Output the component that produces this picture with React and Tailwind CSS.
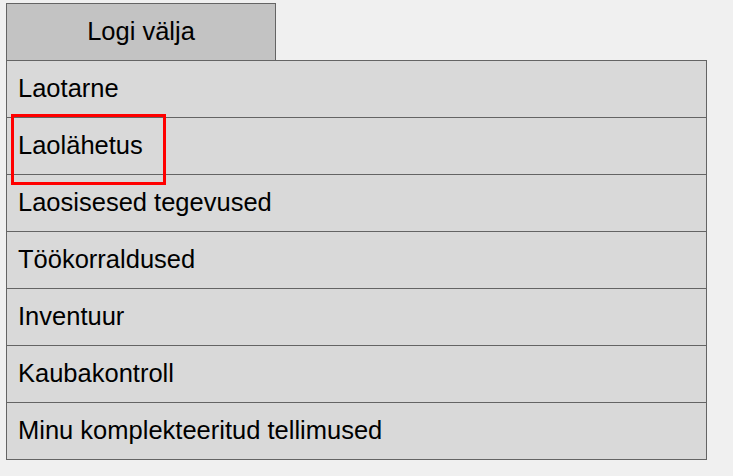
import React from 'react';

const items = [
  'Laotarne',
  'Laolähetus',
  'Laosisesed tegevused',
  'Töökorraldused',
  'Inventuur',
  'Kaubakontroll',
  'Minu komplekteeritud tellimused',
];

export default function App() {
  return (
    <div className="relative w-[733px] h-[476px] bg-[#f0f0f0] pt-[3px] pl-[6px] font-['Liberation_Sans',Arial,sans-serif] text-[25.5px] leading-none text-black">
      {/* Header tab */}
      <div className="w-[270px] h-[57px] border-x border-t border-[#646464] bg-[#c3c3c3] flex items-center justify-center">
        Logi välja
      </div>

      {/* Menu list */}
      <div className="w-[701px] border border-[#646464] bg-[#d9d9d9]">
        {items.map((item, i) => (
          <div
            key={item}
            className={`flex items-center pl-[11px] ${i > 0 ? 'h-[57px] border-t border-[#646464]' : 'h-[56px]'}`}
          >
            {item}
          </div>
        ))}
      </div>

      {/* Highlight box */}
      <div className="absolute left-[11px] top-[114px] w-[155px] h-[71px] border-[3px] border-[#ff0000]" />
    </div>
  );
}
